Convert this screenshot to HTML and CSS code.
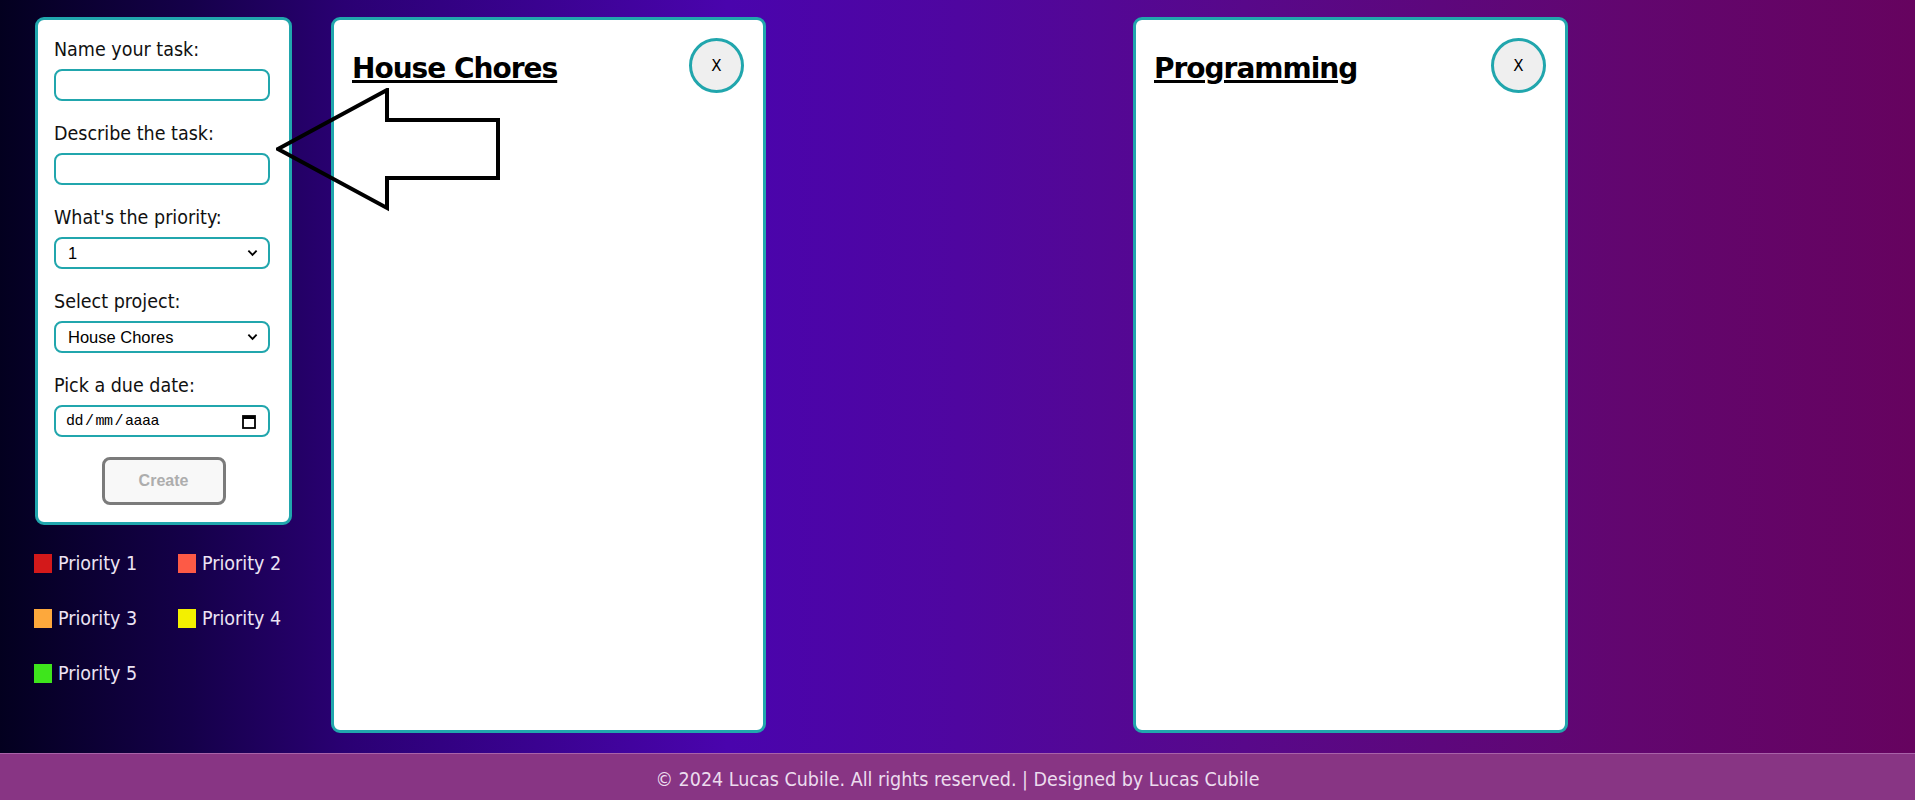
FILE: index.html
```html
<!DOCTYPE html>
<html lang="en">
<head>
<meta charset="utf-8">
<title>To-Do List</title>
<link rel="stylesheet" href="styles.css">
</head>
<body>
<main class="main">
  <aside class="sidebar">
    <form class="task-form">
      <div class="field">
        <label class="field-label" for="name">Name your task:</label>
        <input class="field-input" id="name" type="text">
      </div>
      <div class="field">
        <label class="field-label" for="desc">Describe the task:</label>
        <input class="field-input" id="desc" type="text">
      </div>
      <div class="field">
        <label class="field-label" for="prio">What's the priority:</label>
        <div class="select-wrap">
          <span class="select-value">1</span>
          <svg class="chevron" viewBox="0 0 12 8" width="11" height="8"><path d="M1.5 1.5 L6 6 L10.5 1.5" fill="none" stroke="#000" stroke-width="2"/></svg>
        </div>
      </div>
      <div class="field">
        <label class="field-label" for="proj">Select project:</label>
        <div class="select-wrap">
          <span class="select-value">House Chores</span>
          <svg class="chevron" viewBox="0 0 12 8" width="11" height="8"><path d="M1.5 1.5 L6 6 L10.5 1.5" fill="none" stroke="#000" stroke-width="2"/></svg>
        </div>
      </div>
      <div class="field">
        <label class="field-label" for="date">Pick a due date:</label>
        <div class="select-wrap date-wrap">
          <span class="date-value">dd<span class="slash">/</span>mm<span class="slash">/</span>aaaa</span>
          <svg class="calendar" viewBox="0 0 14 15" width="14" height="15"><rect x="1" y="2" width="12" height="12" fill="none" stroke="#000" stroke-width="1.8"/><rect x="1" y="2" width="12" height="3" fill="#000"/></svg>
        </div>
      </div>
      <div class="actions">
        <button class="create-btn" type="button" disabled>Create</button>
      </div>
    </form>
    <ul class="legend">
      <li class="legend-item"><span class="swatch p1"></span>Priority 1</li>
      <li class="legend-item"><span class="swatch p2"></span>Priority 2</li>
      <li class="legend-item"><span class="swatch p3"></span>Priority 3</li>
      <li class="legend-item"><span class="swatch p4"></span>Priority 4</li>
      <li class="legend-item"><span class="swatch p5"></span>Priority 5</li>
    </ul>
  </aside>
  <section class="projects">
    <div class="project-card">
      <div class="project-head">
        <h2 class="project-title">House Chores</h2>
        <button class="close-btn" type="button">X</button>
      </div>
    </div>
    <div class="project-card">
      <div class="project-head">
        <h2 class="project-title">Programming</h2>
        <button class="close-btn" type="button">X</button>
      </div>
    </div>
  </section>
  <svg class="arrow" width="240" height="140" viewBox="0 0 240 140">
    <path d="M2 61 L111 2 L111 32 L222 32 L222 90 L111 90 L111 120 Z" fill="none" stroke="#000" stroke-width="4" stroke-linejoin="miter"/>
  </svg>
</main>
<footer class="footer">© 2024 Lucas Cubile. All rights reserved. | Designed by Lucas Cubile</footer>
</body>
</html>
```
FILE: styles.css
```css
* { box-sizing: border-box; }
html, body { margin: 0; padding: 0; }
body {
  height: 800px;
  display: flex;
  flex-direction: column;
  font-family: "DejaVu Sans Condensed", "DejaVu Sans", sans-serif;
  background: linear-gradient(to right, #03001f 0%, #15004a 10%, #2a0073 18%, #4a04ad 38%, #4f06a0 50%, #58088a 65%, #62066f 85%, #66035f 100%);
}
.main {
  flex: 1;
  position: relative;
  display: flex;
  align-items: flex-start;
  padding: 17px 0 0 35px;
}
.sidebar { width: 257px; flex: none; }
.task-form {
  background: #fff;
  border: 3px solid #21a6ad;
  border-radius: 9px;
  padding: 19px 16px 17px 16px;
}
.field { margin-bottom: 22px; }
.field-label {
  display: block;
  font-size: 19.5px;
  line-height: 22px;
  color: #111;
  margin-bottom: 8px;
}
.field-input, .select-wrap {
  display: flex;
  align-items: center;
  width: 216px;
  height: 32px;
  border: 2px solid #21a6ad;
  border-radius: 8px;
  background: #fff;
  padding: 0 10px 0 12px;
  font: 16px "Liberation Sans", Arial, sans-serif;
  outline: none;
}
.select-value { flex: 1; color: #000; font-size: 16.5px; }
.chevron { flex: none; }
.date-wrap { padding-left: 10px; }
.date-value { flex: 1; font: 15px "Liberation Mono", "DejaVu Sans Mono", monospace; color: #000; letter-spacing: -0.5px; }
.slash { margin: 0 2px; }
.calendar { flex: none; margin-right: 2px; }
.actions { display: flex; justify-content: center; margin-top: -2px; }
.create-btn {
  width: 124px;
  height: 48px;
  border: 3px solid #7b7b7b;
  border-radius: 8px;
  background: #f8f8f8;
  color: #adadad;
  font: bold 16px "Liberation Sans", Arial, sans-serif;
}
.legend {
  list-style: none;
  margin: 29px 0 0 -1px;
  padding: 0;
  display: grid;
  grid-template-columns: 144px 144px;
  row-gap: 36px;
}
.legend-item {
  display: flex;
  align-items: center;
  height: 19px;
  color: #ece4f4;
  font-size: 19.5px;
}
.swatch { width: 18px; height: 19px; margin-right: 6px; flex: none; }
.p1 { background: #d3191a; }
.p2 { background: #fd5a46; }
.p3 { background: #fda83c; }
.p4 { background: #f3f000; }
.p5 { background: #3ee51c; }
.projects {
  display: flex;
  gap: 367px;
  margin-left: 39px;
}
.project-card {
  width: 435px;
  height: 716px;
  background: #fff;
  border: 3px solid #21a6ad;
  border-radius: 9px;
  padding: 18px 19px 0 18px;
}
.project-head { display: flex; justify-content: space-between; align-items: flex-start; }
.project-title {
  margin: 14px 0 0 0;
  font: bold 28px "DejaVu Sans", sans-serif;
  letter-spacing: -1px;
  text-decoration: underline;
  text-decoration-thickness: 3px;
  color: #000;
}
.close-btn {
  width: 55px;
  height: 55px;
  border-radius: 50%;
  border: 3px solid #21a6ad;
  background: #efefef;
  font: 15px "DejaVu Sans", sans-serif;
  color: #000;
  padding: 0;
}
.arrow { position: absolute; left: 276px; top: 88px; }
.footer {
  height: 47px;
  flex: none;
  background: #883584;
  border-top: 1px solid #a862a8;
  color: #ecdcee;
  font-size: 19.5px;
  display: flex;
  align-items: center;
  justify-content: center;
  padding-top: 4px;
}
```
